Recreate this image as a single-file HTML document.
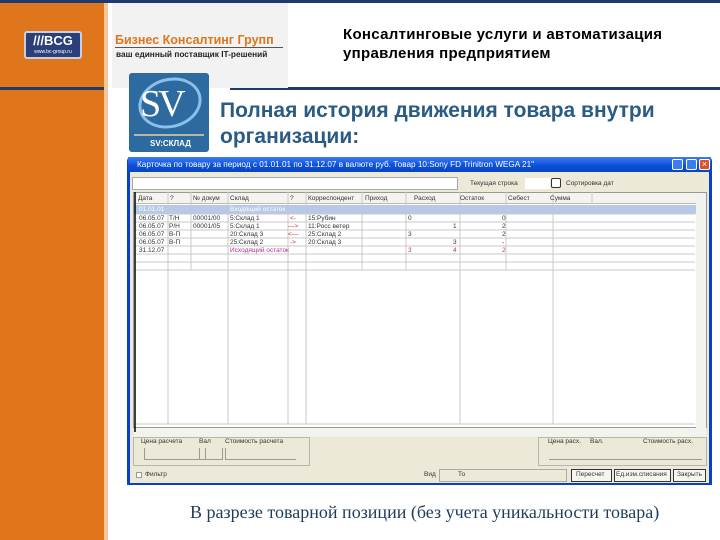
<!DOCTYPE html><html><head><meta charset="utf-8"><style>
*{margin:0;padding:0;box-sizing:border-box}
body{width:720px;height:540px;position:relative;background:#fff;font-family:"Liberation Sans","DejaVu Sans",sans-serif;overflow:hidden}
.a{position:absolute}
.t{font-size:6.5px;color:#333;white-space:nowrap}
</style></head><body>
<div class="a" style="left:0;top:0;width:104px;height:540px;background:#e0761b"></div>
<div class="a" style="left:104px;top:0;width:4px;height:540px;background:#f3c79a"></div>
<div class="a" style="left:0;top:0;width:720px;height:3px;background:#1f3a6e"></div>
<div class="a" style="left:0;top:87px;width:104px;height:3px;background:#1f3a6e"></div>
<div class="a" style="left:230px;top:87px;width:490px;height:3px;background:#1f3a6e"></div>
<div class="a" style="left:112px;top:3px;width:176px;height:85px;background:#f2f2f2"></div>
<div class="a" style="left:24px;top:31px;width:58px;height:28px;background:#2b3f78;border:2px solid #c9cfe0;border-radius:3px;color:#fff;font-weight:bold;font-size:13px;text-align:center;line-height:16px">///BCG<div style="font-size:5px;line-height:6px;font-weight:normal">www.bc-group.ru</div></div>
<div class="a" style="left:115px;top:33px;font-size:12.5px;font-weight:bold;color:#e0761b;white-space:nowrap">Бизнес Консалтинг Групп</div>
<div class="a" style="left:115px;top:47px;width:168px;height:1px;background:#555"></div>
<div class="a" style="left:116px;top:49px;font-size:8.3px;font-weight:bold;color:#222;white-space:nowrap">ваш единный поставщик IT-решений</div>
<div class="a" style="left:343px;top:25px;font-size:15px;font-weight:bold;color:#000;line-height:19px;white-space:nowrap;letter-spacing:0.3px">Консалтинговые услуги и автоматизация<br>управления предприятием</div>
<div class="a" style="left:129px;top:73px;width:80px;height:79px;background:#2d6aa0;border-radius:3px"></div>
<div class="a" style="left:138px;top:78px;width:64px;height:50px;border:3px solid #8cc0ea;border-radius:50%;transform:rotate(-15deg)"></div>
<div class="a" style="left:140px;top:82px;font-family:'Liberation Serif',serif;font-size:38px;color:#fff;letter-spacing:-3px">SV</div>
<div class="a" style="left:134px;top:134px;width:70px;height:2px;background:#b8b8a8"></div>
<div class="a" style="left:150px;top:139px;font-size:8px;font-weight:bold;color:#fff">SV:СКЛАД</div>
<div class="a" style="left:220px;top:98px;font-size:21px;font-weight:bold;color:#2a5b84;line-height:26px;white-space:nowrap">Полная история движения товара внутри<br>организации:</div>
<div class="a" style="left:127px;top:157px;width:585px;height:328px;background:#0a3fc7;border-radius:4px 4px 0 0"></div>
<div class="a" style="left:128px;top:157px;width:583px;height:15px;background:linear-gradient(#3c7df0,#0a4ed8 60%,#0845c0)"></div>
<div class="a t" style="left:137px;top:160px;color:#fff;font-size:8.2px">Карточка по товару за период с 01.01.01 по 31.12.07 в валюте руб. Товар 10:Sony FD Trinitron WEGA 21"</div>
<div class="a" style="left:672px;top:159px;width:11px;height:11px;background:#3d7cef;border:1px solid #fff;border-radius:2px"></div>
<div class="a" style="left:686px;top:159px;width:11px;height:11px;background:#3d7cef;border:1px solid #fff;border-radius:2px"></div>
<div class="a" style="left:699px;top:159px;width:11px;height:11px;background:#d9522a;border:1px solid #fff;border-radius:2px;color:#fff;font-size:9px;line-height:9px;text-align:center">×</div>
<div class="a" style="left:130px;top:172px;width:579px;height:311px;background:#ece9d8"></div>
<div class="a" style="left:132px;top:177px;width:326px;height:13px;background:#fff;border:1px solid #aaa"></div>
<div class="a t" style="left:470px;top:180px">Текущая строка</div>
<div class="a" style="left:525px;top:178px;width:25px;height:11px;background:#fff"></div>
<div class="a" style="left:551px;top:178px;width:10px;height:10px;background:#fff;border:1px solid #333;border-radius:2px"></div>
<div class="a t" style="left:566px;top:180px">Сортировка дат</div>
<div class="a" style="left:133px;top:192px;width:574px;height:236px;background:#fff;border:1px solid #999"></div>
<div class="a" style="left:134px;top:193px;width:572px;height:11px;background:#f4f3ee;border-bottom:1px solid #bbb"></div>
<div class="a" style="left:134px;top:205px;width:562px;height:9px;background:#b6c9e6"></div>
<div class="a" style="left:696px;top:193px;width:10px;height:235px;background:#f3f3ee"></div>
<div class="a" style="left:134px;top:428px;width:572px;height:9px;background:#f3f3ee"></div>
<svg class="a" style="left:133px;top:192px" width="574" height="245">
<g stroke="#c8c8c8" stroke-width="1">
<line x1="35" y1="0" x2="35" y2="232"/><line x1="95" y1="0" x2="95" y2="232"/><line x1="155" y1="0" x2="155" y2="232"/><line x1="173" y1="0" x2="173" y2="232"/><line x1="327" y1="0" x2="327" y2="232"/><line x1="420" y1="0" x2="420" y2="232"/>
<line x1="58" y1="0" x2="58" y2="78"/><line x1="229" y1="0" x2="229" y2="78"/><line x1="273" y1="0" x2="273" y2="78"/><line x1="373" y1="0" x2="373" y2="78"/><line x1="459" y1="0" x2="459" y2="12"/>
<line x1="1" y1="22" x2="562" y2="22"/><line x1="1" y1="30" x2="562" y2="30"/><line x1="1" y1="38" x2="562" y2="38"/><line x1="1" y1="46" x2="562" y2="46"/><line x1="1" y1="54" x2="562" y2="54"/><line x1="1" y1="62" x2="562" y2="62"/><line x1="1" y1="70" x2="562" y2="70"/><line x1="1" y1="78" x2="562" y2="78"/><line x1="1" y1="232" x2="562" y2="232"/>
</g>
<line x1="2" y1="0" x2="2" y2="240" stroke="#000" stroke-width="1.5"/>
</svg>
<div class="a t" style="left:138px;top:195px">Дата</div><div class="a t" style="left:170px;top:195px">?</div><div class="a t" style="left:193px;top:195px">№ докум</div>
<div class="a t" style="left:230px;top:195px">Склад</div><div class="a t" style="left:290px;top:195px">?</div>
<div class="a t" style="left:308px;top:195px">Корреспондент</div><div class="a t" style="left:365px;top:195px">Приход</div>
<div class="a t" style="left:414px;top:195px">Расход</div><div class="a t" style="left:460px;top:195px">Остаток</div>
<div class="a t" style="left:508px;top:195px">Себест</div><div class="a t" style="left:550px;top:195px">Сумма</div>
<div class="a t" style="left:139px;top:206px;color:#fff">01.01.01</div><div class="a t" style="left:230px;top:206px;color:#fff">Входящий остаток</div>
<div class="a t" style="left:139px;top:215px">06.05.07</div><div class="a t" style="left:169px;top:215px">Т/Н</div><div class="a t" style="left:193px;top:215px">00001/00</div><div class="a t" style="left:230px;top:215px">5:Склад 1</div><div class="a t" style="left:308px;top:215px">15:Рубин</div><div class="a t" style="left:408px;top:215px">0</div><div class="a t" style="left:502px;top:215px">0</div>
<div class="a t" style="left:139px;top:223px">06.05.07</div><div class="a t" style="left:169px;top:223px">Р/Н</div><div class="a t" style="left:193px;top:223px">00001/05</div><div class="a t" style="left:230px;top:223px">5:Склад 1</div><div class="a t" style="left:308px;top:223px">11:Росс ветер</div><div class="a t" style="left:453px;top:223px">1</div><div class="a t" style="left:502px;top:223px">2</div>
<div class="a t" style="left:139px;top:231px">06.05.07</div><div class="a t" style="left:169px;top:231px">В-П</div><div class="a t" style="left:230px;top:231px">20:Склад 3</div><div class="a t" style="left:308px;top:231px">25:Склад 2</div><div class="a t" style="left:408px;top:231px">3</div><div class="a t" style="left:502px;top:231px">2</div>
<div class="a t" style="left:139px;top:239px">06.05.07</div><div class="a t" style="left:169px;top:239px">В-П</div><div class="a t" style="left:230px;top:239px">25:Склад 2</div><div class="a t" style="left:308px;top:239px">20:Склад 3</div><div class="a t" style="left:453px;top:239px">3</div><div class="a t" style="left:502px;top:239px">-</div>
<div class="a t" style="left:139px;top:247px">31.12.07</div><div class="a t" style="left:230px;top:247px;color:#b0308f">Исходящий остаток</div><div class="a t" style="left:408px;top:247px;color:#b0308f">3</div><div class="a t" style="left:453px;top:247px;color:#b0308f">4</div><div class="a t" style="left:502px;top:247px;color:#b0308f">2</div>
<div class="a t" style="left:290px;top:215px;color:#c33">&lt;-</div><div class="a t" style="left:288px;top:223px;color:#c33">—&gt;</div><div class="a t" style="left:288px;top:231px;color:#c33">&lt;—</div><div class="a t" style="left:290px;top:239px;color:#c33">-&gt;</div>
<div class="a" style="left:133px;top:437px;width:177px;height:29px;border:1px solid #b8b6a8"></div>
<div class="a t" style="left:141px;top:438px">Цена расчета</div><div class="a t" style="left:199px;top:438px">Вал</div><div class="a t" style="left:225px;top:438px">Стоимость расчета</div>
<div class="a" style="left:144px;top:448px;width:62px;height:12px;border-left:1px solid #999;border-bottom:1px solid #999;border-right:1px solid #999"></div>
<div class="a" style="left:199px;top:448px;width:24px;height:12px;border:1px solid #999;border-top:none"></div>
<div class="a" style="left:225px;top:448px;width:71px;height:12px;border-bottom:1px solid #999;border-left:1px solid #999"></div>
<div class="a" style="left:538px;top:437px;width:169px;height:29px;border:1px solid #b8b6a8"></div>
<div class="a t" style="left:548px;top:438px">Цена расх.</div><div class="a t" style="left:590px;top:438px">Вал.</div><div class="a t" style="left:643px;top:438px">Стоимость расх.</div>
<div class="a" style="left:549px;top:448px;width:153px;height:12px;border-bottom:1px solid #999"></div>
<div class="a" style="left:136px;top:472px;width:6px;height:6px;border:1px solid #999;background:#fff"></div>
<div class="a t" style="left:145px;top:471px">Фильтр</div>
<div class="a t" style="left:424px;top:471px">Вид</div><div class="a t" style="left:458px;top:471px">То</div>
<div class="a" style="left:439px;top:469px;width:128px;height:13px;border:1px solid #aaa"></div>
<div class="a" style="left:571px;top:469px;width:41px;height:13px;border:1px solid #333;background:#f6f6f0"></div><div class="a t" style="left:576px;top:471px">Пересчет</div>
<div class="a" style="left:614px;top:469px;width:57px;height:13px;border:1px solid #333;background:#f6f6f0"></div><div class="a t" style="left:616px;top:471px">Ед.изм.списания</div>
<div class="a" style="left:673px;top:469px;width:33px;height:13px;border:1px solid #333;background:#f6f6f0"></div><div class="a t" style="left:677px;top:471px">Закрыть</div>
<div class="a" style="left:190px;top:502px;font-family:'Liberation Serif',serif;font-size:18px;color:#1d3d5a;white-space:nowrap">В разрезе товарной позиции (без учета уникальности товара)</div>
</body></html>
